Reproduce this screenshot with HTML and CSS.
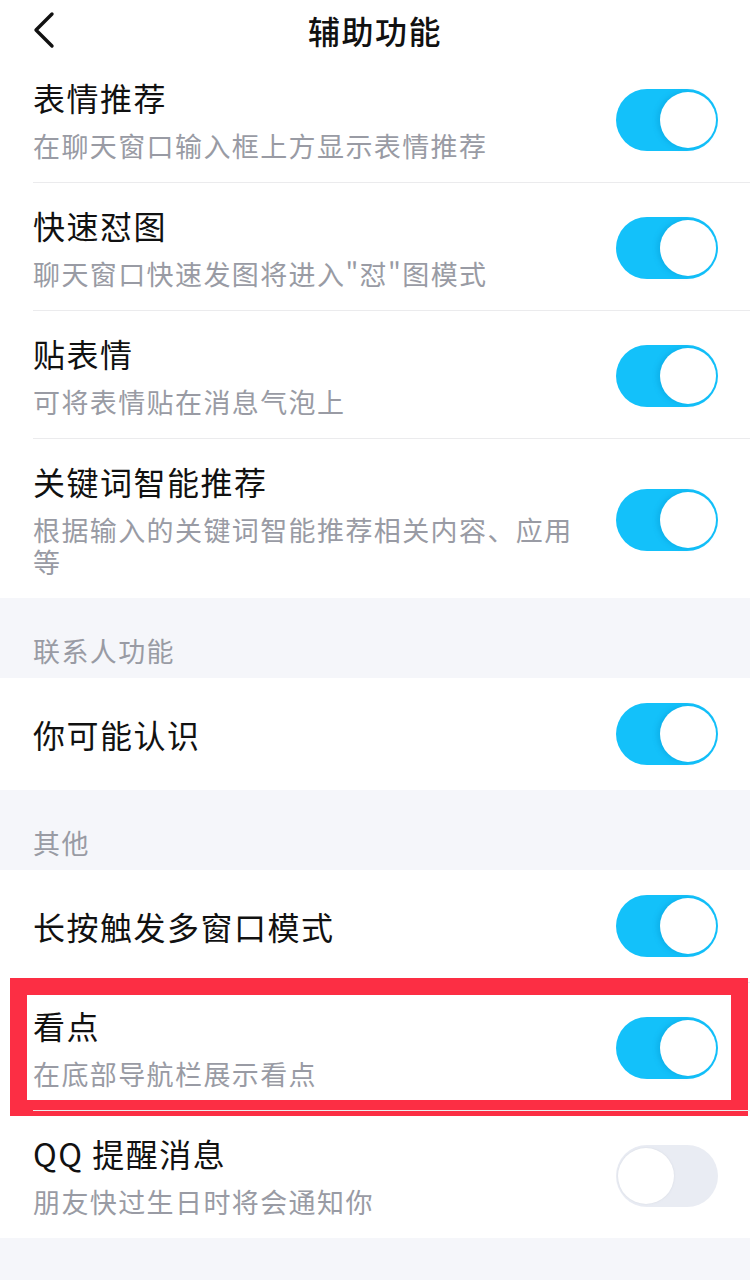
FILE: index.html
```html
<!DOCTYPE html>
<html lang="zh-CN">
<head>
  <meta charset="UTF-8" />
  <title>辅助功能</title>
  <link rel="stylesheet" href="styles.css">
</head>
<body>
  <div class="nav-bar">
    <span class="back">
      <svg width="24" height="40" viewBox="0 0 24 40">
        <polyline points="20,4 4,20 20,36" fill="none" stroke="#111" stroke-width="3.4" stroke-linecap="round" stroke-linejoin="round" />
      </svg>
    </span>
    <h1>辅助功能</h1>
  </div>

  <div class="group">
    <div class="row">
      <div class="text">
        <div class="title">表情推荐</div>
        <div class="desc">在聊天窗口输入框上方显示表情推荐</div>
      </div>
      <span class="switch on"></span>
    </div>
    <div class="row">
      <div class="text">
        <div class="title">快速怼图</div>
        <div class="desc">聊天窗口快速发图将进入"怼"图模式</div>
      </div>
      <span class="switch on"></span>
    </div>
    <div class="row">
      <div class="text">
        <div class="title">贴表情</div>
        <div class="desc">可将表情贴在消息气泡上</div>
      </div>
      <span class="switch on"></span>
    </div>
    <div class="row">
      <div class="text">
        <div class="title">关键词智能推荐</div>
        <div class="desc">根据输入的关键词智能推荐相关内容、应用等</div>
      </div>
      <span class="switch on"></span>
    </div>
  </div>

  <div class="section-label">联系人功能</div>
  <div class="group">
    <div class="row single">
      <div class="text">
        <div class="title">你可能认识</div>
      </div>
      <span class="switch on"></span>
    </div>
  </div>

  <div class="section-label">其他</div>
  <div class="group">
    <div class="row single">
      <div class="text">
        <div class="title">长按触发多窗口模式</div>
      </div>
      <span class="switch on"></span>
    </div>
    <!-- 红框标注 -->
    <div class="row marked">
      <div class="text">
        <div class="title">看点</div>
        <div class="desc">在底部导航栏展示看点</div>
      </div>
      <span class="switch on"></span>
    </div>
    <div class="row">
      <div class="text">
        <div class="title">QQ 提醒消息</div>
        <div class="desc">朋友快过生日时将会通知你</div>
      </div>
      <span class="switch"></span>
    </div>
  </div>

  <div class="footer-space"></div>
</body>
</html>
```

FILE: styles.css
```css
body {
  margin: 0;
  font-family: "Noto Sans CJK SC", "Noto Sans", sans-serif;
  background-color: #f5f6fa;
  color: #111;
}
.nav-bar {
  height: 48px;
  padding-top: 6px;
  background-color: #fff;
  display: flex;
  align-items: center;
  justify-content: center;
  position: relative;
}
.back {
  position: absolute;
  left: 32px;
  top: 10px;
  display: flex;
}
.nav-bar h1 {
  margin: 0;
  font-size: 32px;
  font-weight: 500;
  letter-spacing: 1.5px;
  line-height: 40px;
}
.group {
  background-color: #fff;
}
.row {
  display: flex;
  align-items: center;
  gap: 30px;
  padding: 23px 32px 20px 33px;
  position: relative;
}
.row + .row::before {
  content: "";
  position: absolute;
  left: 33px;
  right: 0;
  top: 0;
  border-top: 1px solid #ebebed;
}
.row.single {
  padding-top: 25px;
  padding-bottom: 25px;
}
.text {
  flex: 1;
  min-width: 0;
}
.title {
  font-size: 32px;
  line-height: 40px;
  letter-spacing: 1.5px;
  color: #111;
}
.desc {
  margin-top: 13px;
  font-size: 27px;
  line-height: 32px;
  letter-spacing: 1.4px;
  color: #999ba4;
}
.section-label {
  padding: 37px 33px 11px;
  font-size: 27px;
  line-height: 32px;
  letter-spacing: 1.4px;
  color: #999ba4;
}
.switch {
  flex: none;
  width: 102px;
  height: 62px;
  border-radius: 31px;
  background-color: #e9ecf3;
  position: relative;
}
.switch::after {
  content: "";
  position: absolute;
  top: 3px;
  left: 2px;
  width: 56px;
  height: 56px;
  border-radius: 50%;
  background-color: #fff;
  box-shadow: 0 0 2px rgba(200, 205, 215, 0.6);
}
.switch.on {
  background-color: #13c1fa;
}
.switch.on::after {
  left: auto;
  right: 2px;
  box-shadow: -3px 0 5px rgba(0, 140, 200, 0.3);
}
.row.marked::after {
  content: "";
  position: absolute;
  left: 10px;
  right: 2px;
  top: -4px;
  bottom: -6px;
  border: 17px solid #fc2e44;
  border-bottom-width: 16px;
  pointer-events: none;
}
.footer-space {
  height: 40px;
}
```
